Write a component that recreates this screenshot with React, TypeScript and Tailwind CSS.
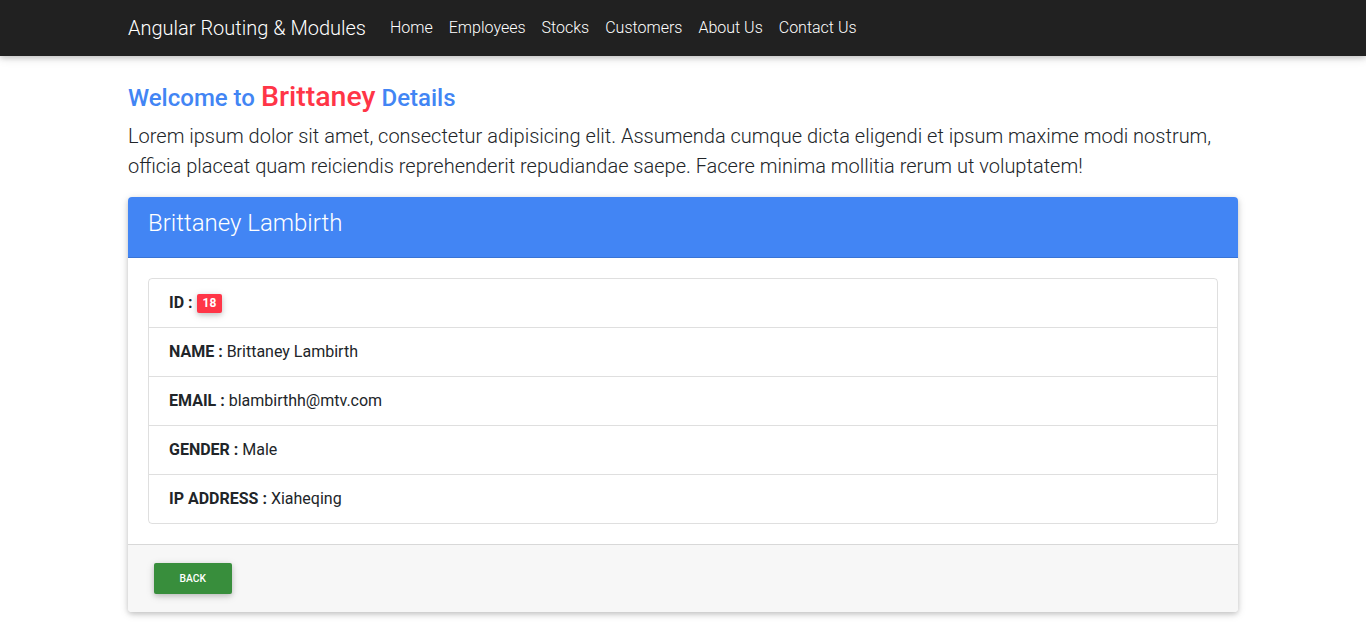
import React from "react";

export default function App() {
  const rows: [string, React.ReactNode][] = [
    ["ID :", <span key="b" className="ml-1 inline-block rounded-[2px] bg-[#ff3547] px-[6px] py-[2px] text-[12px] font-bold leading-[15px] text-white shadow-[0_2px_5px_0_rgba(0,0,0,0.16),0_2px_10px_0_rgba(0,0,0,0.12)] align-[1px]">18</span>],
    ["NAME :", " Brittaney Lambirth"],
    ["EMAIL :", " blambirthh@mtv.com"],
    ["GENDER :", " Male"],
    ["IP ADDRESS :", " Xiaheqing"],
  ];
  return (
    <div className="min-h-screen bg-white text-[#212529]" style={{ fontFamily: "Roboto, 'Liberation Sans', sans-serif" }}>
      <nav className="h-14 bg-[#212121] shadow-[0_2px_5px_0_rgba(0,0,0,0.16),0_2px_10px_0_rgba(0,0,0,0.12)]">
        <div className="mx-auto flex h-full w-[1110px] items-center">
          <span className="mr-4 text-[20px] font-light text-white">Angular Routing &amp; Modules</span>
          <div className="flex items-center">
            {["Home", "Employees", "Stocks", "Customers", "About Us", "Contact Us"].map((l) => (
              <span key={l} className="px-2 text-[16px] font-light text-white">{l}</span>
            ))}
          </div>
        </div>
      </nav>
      <div className="mx-auto w-[1110px] pt-[26px]">
        <h4 className="text-[24px] font-medium leading-[29px] text-[#4285f4]">
          Welcome to <span className="text-[28.5px] text-[#ff3547]">Brittaney</span> Details
        </h4>
        <p className="mt-[8px] text-[20px] font-light leading-[30px]">
          Lorem ipsum dolor sit amet, consectetur adipisicing elit. Assumenda cumque dicta eligendi et ipsum maxime modi nostrum, officia placeat quam reiciendis reprehenderit repudiandae saepe. Facere minima mollitia rerum ut voluptatem!
        </p>
        <div className="mt-[16px] overflow-hidden rounded-[4px] bg-white shadow-[0_2px_5px_0_rgba(0,0,0,0.16),0_2px_10px_0_rgba(0,0,0,0.12)]">
          <div className="h-[61px] border-b border-black/[0.125] bg-[#4285f4] px-5 pt-[12px]">
            <h3 className="text-[24px] font-light leading-[29px] text-white">Brittaney Lambirth</h3>
          </div>
          <div className="p-5">
            <ul className="rounded-[4px] border border-black/[0.125]">
              {rows.map(([k, v], i) => (
                <li key={k} className={`px-5 py-3 text-[16px] leading-6 ${i > 0 ? "border-t border-black/[0.125]" : ""}`}>
                  <b className="font-bold">{k}</b>
                  {v}
                </li>
              ))}
            </ul>
          </div>
          <div className="border-t border-black/[0.125] bg-[#f7f7f7] px-5 py-3">
            <button className="m-[6px] block h-[31px] rounded-[2px] bg-[#388e3c] px-[25.6px] text-[10.24px] font-medium uppercase text-white shadow-[0_2px_5px_0_rgba(0,0,0,0.16),0_2px_10px_0_rgba(0,0,0,0.12)]">
              Back
            </button>
          </div>
        </div>
      </div>
    </div>
  );
}
